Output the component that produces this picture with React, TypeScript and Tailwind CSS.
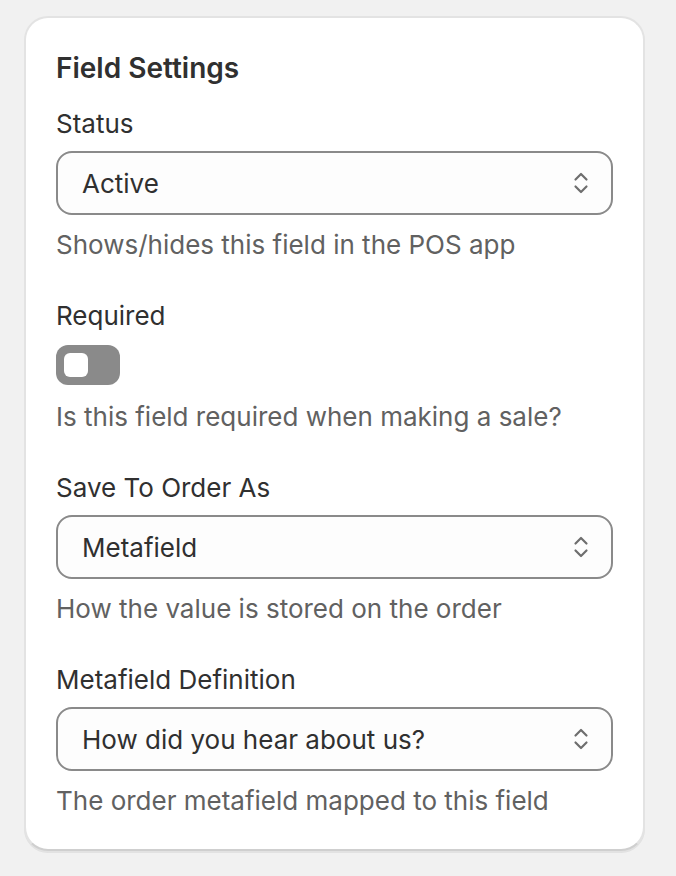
const font = { fontFamily: "Inter, 'Noto Sans', sans-serif" };

function SelectChevron() {
  return (
    <svg width="20" height="28" viewBox="0 0 20 28" fill="none" className="text-[#6e6e6e]">
      <path d="M4.5 10.5 L10 5 L15.5 10.5" stroke="currentColor" strokeWidth="2.2" strokeLinecap="round" strokeLinejoin="round" />
      <path d="M4.5 17.5 L10 23 L15.5 17.5" stroke="currentColor" strokeWidth="2.2" strokeLinecap="round" strokeLinejoin="round" />
    </svg>
  );
}

function SelectField({ label, value, help }: { label: string; value: string; help: string }) {
  return (
    <div className="flex flex-col">
      <div className="text-[26px] leading-[40px] text-[#303030]">{label}</div>
      <div className="mt-[7px] h-[64px] rounded-[16px] border-2 border-[#8a8a8a] bg-[#fdfdfd] pl-6 pr-5 flex items-center justify-between">
        <span className="text-[26px] text-[#303030]">{value}</span>
        <SelectChevron />
      </div>
      <div className="mt-[10px] text-[26px] leading-[40px] text-[#616161]">{help}</div>
    </div>
  );
}

export default function App() {
  return (
    <div className="min-h-screen bg-[#f1f1f1] pt-4 px-6" style={font}>
      <div className="w-[621px] rounded-[24px] bg-white border-2 border-[#e3e3e3] border-b-[#cfcfcf] shadow-[0_2px_0_0_rgba(26,26,26,0.07)] px-[30px] pt-[30px] pb-[28px]">
        <h2 className="text-[28px] leading-[40px] font-semibold text-[#303030]">Field Settings</h2>

        <div className="mt-[16px] flex flex-col gap-[31px]">
          <SelectField label="Status" value="Active" help="Shows/hides this field in the POS app" />

          {/* Required toggle */}
          <div className="flex flex-col">
            <div className="text-[26px] leading-[40px] text-[#303030]">Required</div>
            <div className="mt-[9px] w-[64px] h-[40px] rounded-[12px] bg-[#8a8a8a] p-2 flex items-center">
              <div className="w-6 h-6 rounded-[6px] bg-white" />
            </div>
            <div className="mt-3 text-[26px] leading-[40px] text-[#616161]">Is this field required when making a sale?</div>
          </div>

          <SelectField label="Save To Order As" value="Metafield" help="How the value is stored on the order" />
          <SelectField label="Metafield Definition" value="How did you hear about us?" help="The order metafield mapped to this field" />
        </div>
      </div>
    </div>
  );
}
